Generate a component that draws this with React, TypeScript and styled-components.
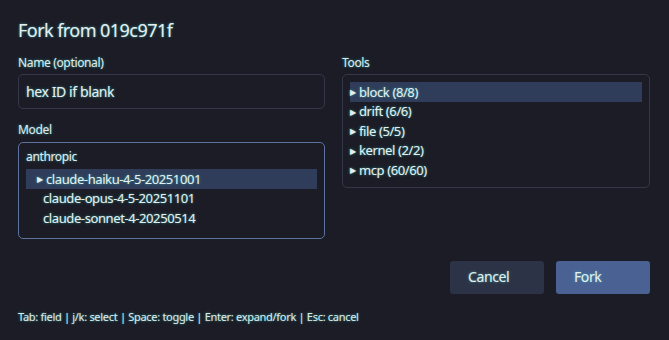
import React from 'react'
import styled, { createGlobalStyle, css } from 'styled-components'

const GlobalStyle = createGlobalStyle`
  html, body {
    margin: 0;
    padding: 0;
    background: #1b1c26;
  }
  body {
    font-family: 'Noto Sans', 'Open Sans', sans-serif;
    color: #e3eaee;
  }
`

const glow = css`
  text-shadow: 0 0 3px rgba(70, 200, 190, 0.6), 0 0 1px rgba(70, 200, 190, 0.45);
`

const Dialog = styled.div`
  width: 669px;
  height: 340px;
  box-sizing: border-box;
  padding: 19px 19px 0 18px;
  background: #1b1c26;
  display: flex;
  flex-direction: column;
`

const Title = styled.h1`
  margin: 0;
  font-size: 18px;
  line-height: 22px;
  font-weight: 400;
  letter-spacing: -0.55px;
  color: #e6edf0;
  ${glow}
`

const Columns = styled.div`
  display: grid;
  grid-template-columns: 307px 308px;
  column-gap: 17px;
  margin-top: 14px;
  align-items: start;
`

const Column = styled.div`
  display: flex;
  flex-direction: column;
`

const Label = styled.div<{ $top?: number }>`
  font-size: 12px;
  line-height: 16px;
  letter-spacing: -0.35px;
  margin-top: ${p => p.$top ?? 0}px;
  margin-bottom: ${p => (p.$top ? 4 : 3)}px;
  color: #dfe6ea;
  ${glow}
`

const Input = styled.div`
  height: 35px;
  box-sizing: border-box;
  border: 1px solid #33374a;
  border-radius: 5px;
  padding: 0 7px;
  display: flex;
  align-items: center;
  font-size: 14px;
  letter-spacing: -0.4px;
  color: #e6edf0;
  ${glow}
`

const ListBox = styled.div<{ $focused?: boolean }>`
  box-sizing: border-box;
  border: 1px solid ${p => (p.$focused ? '#5d729f' : '#33374a')};
  border-radius: 5px;
  padding: ${p => (p.$focused ? '6px 7px 10px' : '7px 7px 7.5px')};
  display: flex;
  flex-direction: column;
`

const Group = styled.div`
  font-size: 12px;
  line-height: 16px;
  letter-spacing: -0.35px;
  margin-bottom: 4px;
  ${glow}
`

const Row = styled.div<{ $selected?: boolean; $indent?: number }>`
  height: 19.5px;
  display: flex;
  align-items: center;
  padding-left: ${p => p.$indent ?? 0}px;
  font-size: 13px;
  letter-spacing: -0.4px;
  background: ${p => (p.$selected ? '#2f3d5a' : 'transparent')};
  color: #e6edf0;
  white-space: nowrap;
  ${glow}
`

const Marker = styled.span`
  font-size: 8px;
  width: 9px;
  display: inline-block;
`

const Spacer = styled.span`
  width: 6px;
  display: inline-block;
`

const Actions = styled.div`
  display: flex;
  justify-content: flex-end;
  gap: 12px;
  margin-top: 22px;
`

const Button = styled.button<{ $primary?: boolean }>`
  width: 94px;
  height: 33px;
  border: none;
  border-radius: 3px;
  padding: 0 0 1px 18px;
  text-align: left;
  font-family: inherit;
  font-size: 14px;
  letter-spacing: -0.4px;
  color: #e6edf0;
  background: ${p => (p.$primary ? '#4a6293' : '#2d3346')};
  ${glow}
`

const Hint = styled.div`
  margin-top: 15px;
  font-size: 11px;
  line-height: 16px;
  letter-spacing: -0.3px;
  color: #dfe6ea;
  ${glow}
`

const models = ['claude-haiku-4-5-20251001', 'claude-opus-4-5-20251101', 'claude-sonnet-4-20250514']
const tools = ['block (8/8)', 'drift (6/6)', 'file (5/5)', 'kernel (2/2)', 'mcp (60/60)']

export default function App() {
  return (
    <>
      <GlobalStyle />
      <Dialog>
        <Title>Fork from 019c971f</Title>
        <Columns>
          <Column>
            <Label>Name (optional)</Label>
            <Input>hex ID if blank</Input>
            <Label $top={13}>Model</Label>
            <ListBox $focused>
              <Group>anthropic</Group>
              {models.map((m, i) => (
                <Row key={m} $selected={i === 0} $indent={11}>
                  {i === 0 ? <Marker>▶</Marker> : <Spacer />}
                  {m}
                </Row>
              ))}
            </ListBox>
          </Column>
          <Column>
            <Label>Tools</Label>
            <ListBox>
              {tools.map((t, i) => (
                <Row key={t} $selected={i === 0}>
                  <Marker>▶</Marker>
                  {t}
                </Row>
              ))}
            </ListBox>
          </Column>
        </Columns>
        <Actions>
          <Button>Cancel</Button>
          <Button $primary>Fork</Button>
        </Actions>
        <Hint>Tab: field | j/k: select | Space: toggle | Enter: expand/fork | Esc: cancel</Hint>
      </Dialog>
    </>
  )
}
